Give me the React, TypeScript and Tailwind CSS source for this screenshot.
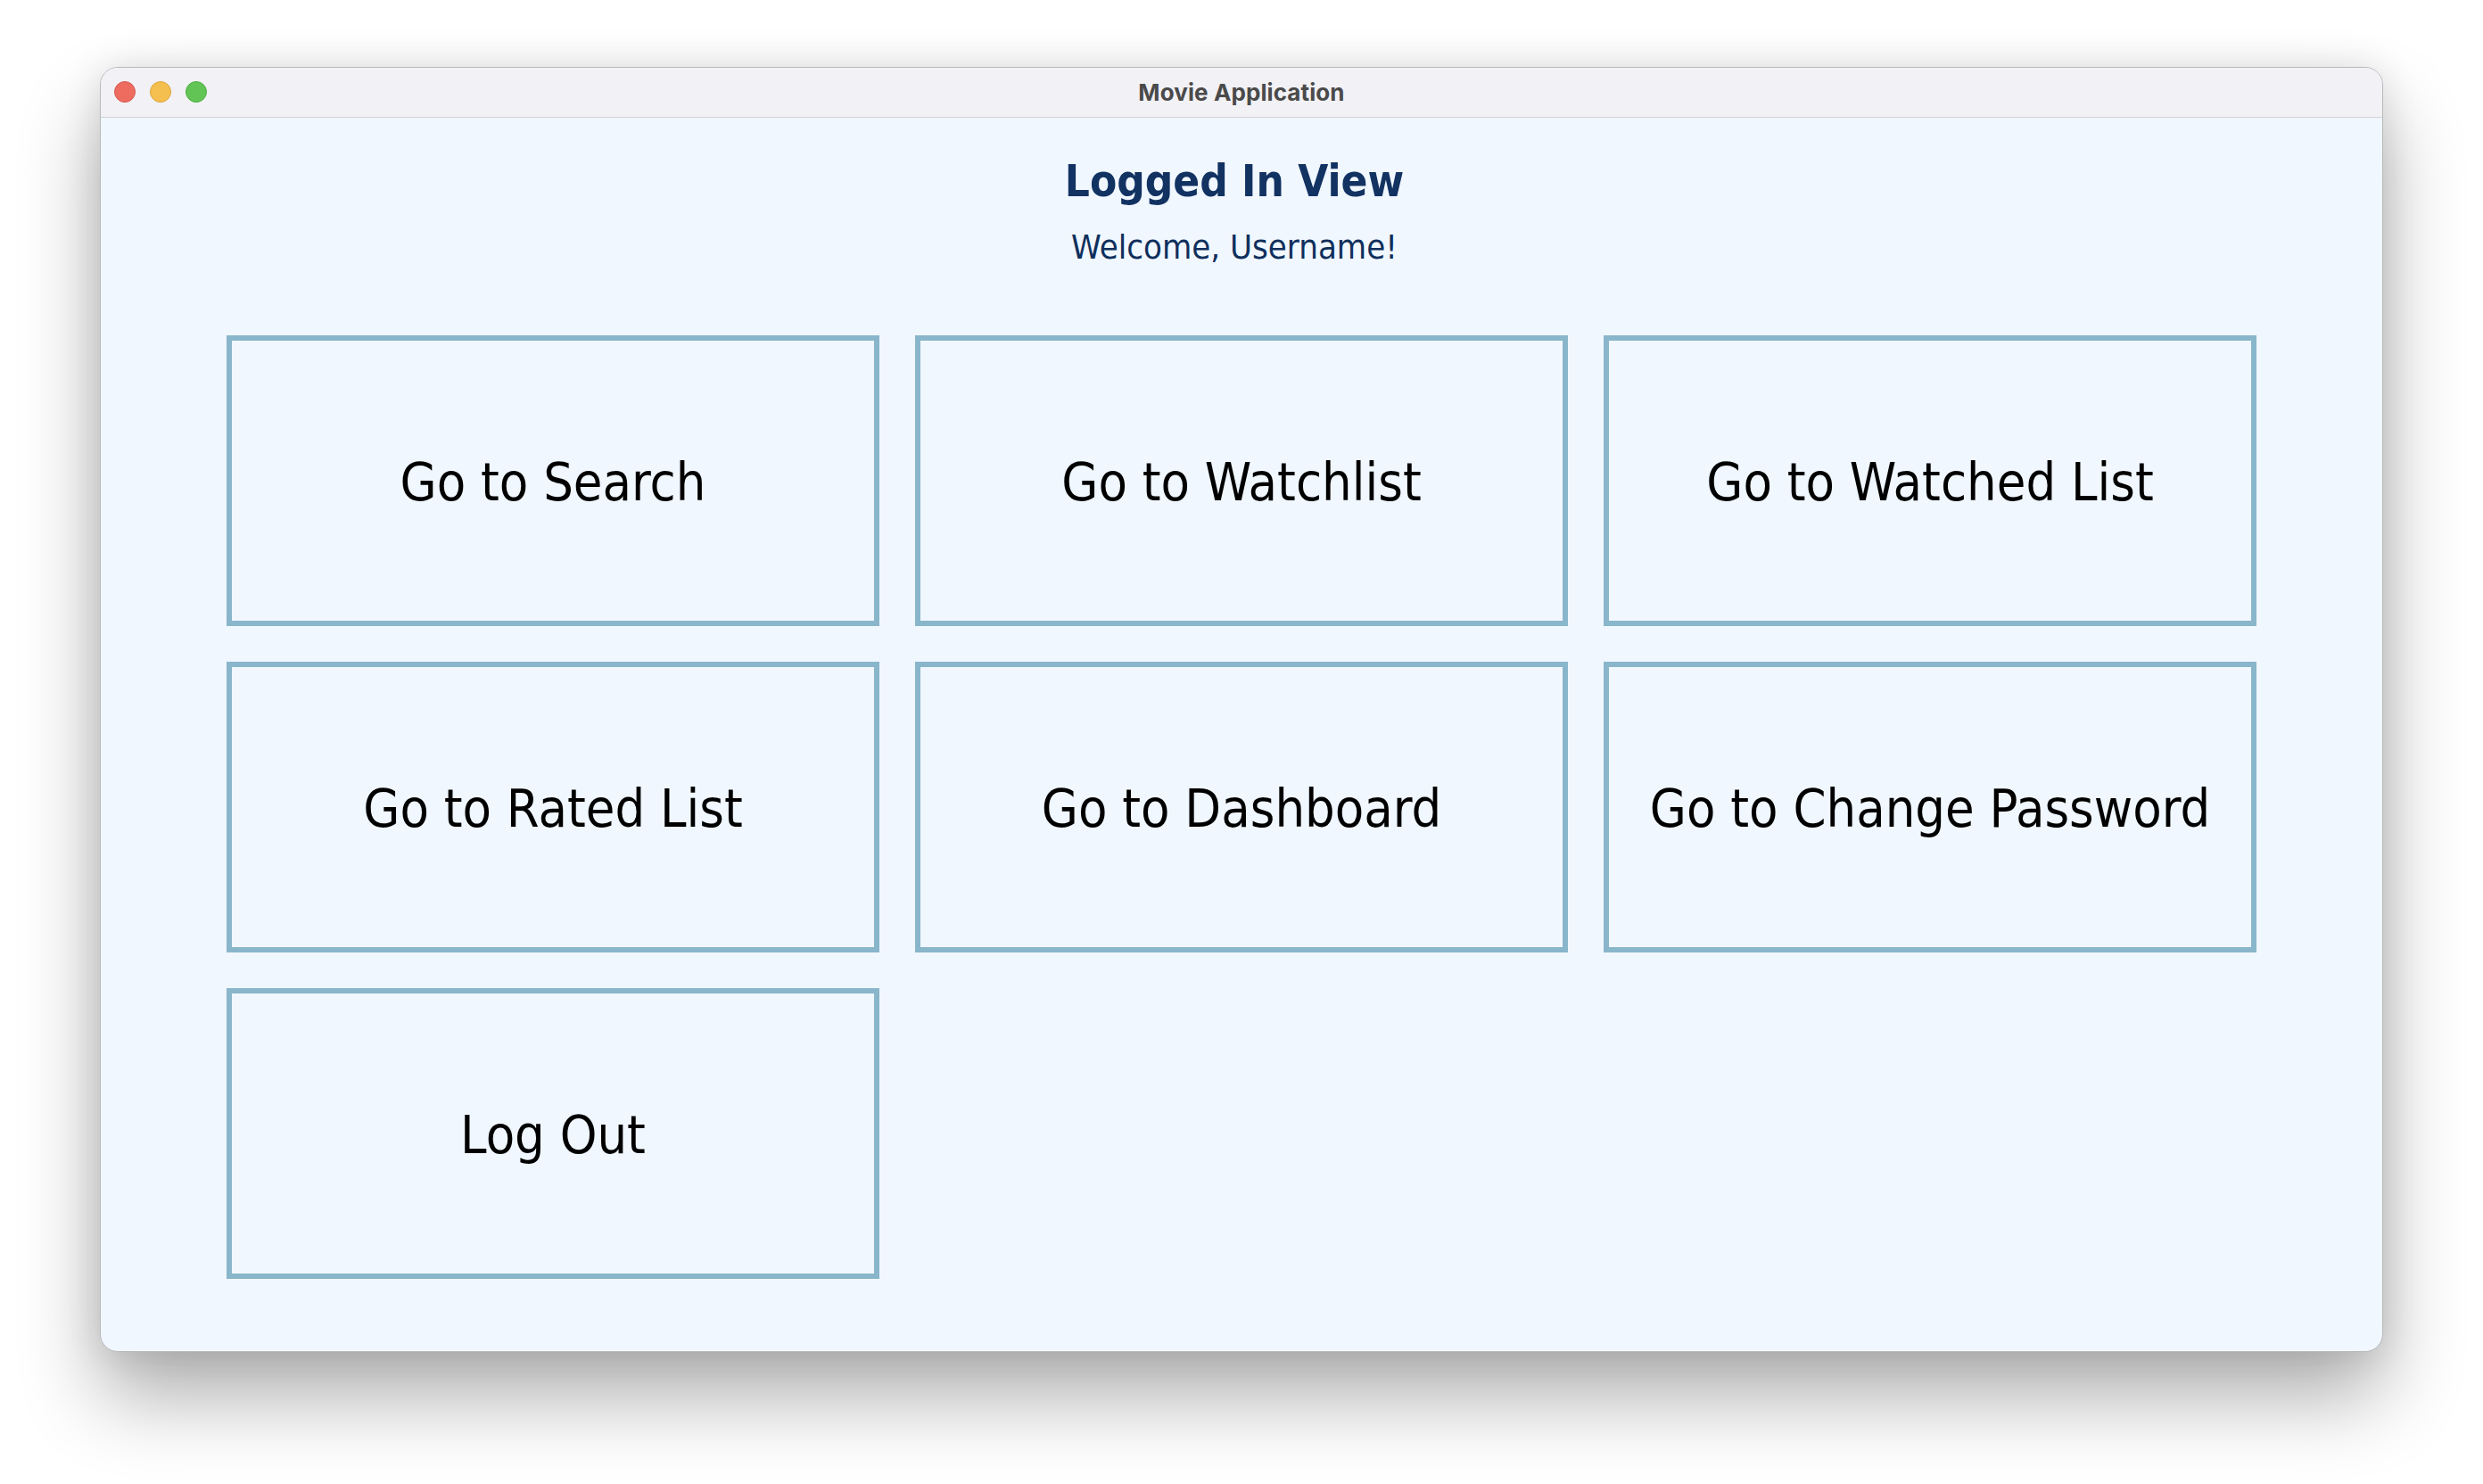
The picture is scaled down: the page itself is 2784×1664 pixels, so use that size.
import React from "react";

const buttons = [
  "Go to Search",
  "Go to Watchlist",
  "Go to Watched List",
  "Go to Rated List",
  "Go to Dashboard",
  "Go to Change Password",
  "Log Out",
];

export default function App() {
  return (
    <div className="w-[2784px] h-[1664px] bg-white pl-[112px] pt-[75px] overflow-hidden">
      <div className="w-[2560px] h-[1441px] rounded-[20px] border border-[#b9b9bb] overflow-hidden flex flex-col bg-[#f0f7ff] shadow-[0_50px_90px_rgba(0,0,0,0.32),0_0_40px_rgba(0,0,0,0.10)]">
        {/* Title bar */}
        <div className="relative h-[56px] shrink-0 bg-[#f2f1f5] border-b border-[#d2d2d6] flex items-center justify-center">
          <div className="absolute left-[15px] top-[15px] flex gap-[16px]">
            <span className="w-[24px] h-[24px] rounded-full bg-[#ed6b5f] border border-[#d45a4f]" />
            <span className="w-[24px] h-[24px] rounded-full bg-[#f5bf4f] border border-[#d9a53c]" />
            <span className="w-[24px] h-[24px] rounded-full bg-[#61c454] border border-[#4fae45]" />
          </div>
          <span className="text-[26px] font-bold text-[#4a4a4a] font-['Inter',sans-serif] tracking-[0.1px]">
            Movie Application
          </span>
        </div>

        {/* Content */}
        <div className="flex-1 flex flex-col items-center pt-[42px]">
          <div className="pr-[16px] flex flex-col items-center">
            <h1 className="text-[49px] leading-[60px] font-bold text-[#123262] font-['DejaVu_Sans_Condensed','DejaVu_Sans',sans-serif]">
              Logged In View
            </h1>
            <p className="mt-[21px] text-[38px] leading-[44px] text-[#0f2f5c] font-['DejaVu_Sans_Condensed','DejaVu_Sans',sans-serif]">
              Welcome, Username!
            </p>
          </div>

          <div className="mt-[77px] grid grid-cols-[732px_732px_732px] auto-rows-[326px] gap-[40px]">
            {buttons.map((b) => (
              <div
                key={b}
                className="border-[6px] border-[#89b6cb] flex items-center justify-center pt-[4px] text-black text-[59px] font-['DejaVu_Sans_Condensed','DejaVu_Sans',sans-serif]"
              >
                {b}
              </div>
            ))}
          </div>
        </div>
      </div>
    </div>
  );
}
